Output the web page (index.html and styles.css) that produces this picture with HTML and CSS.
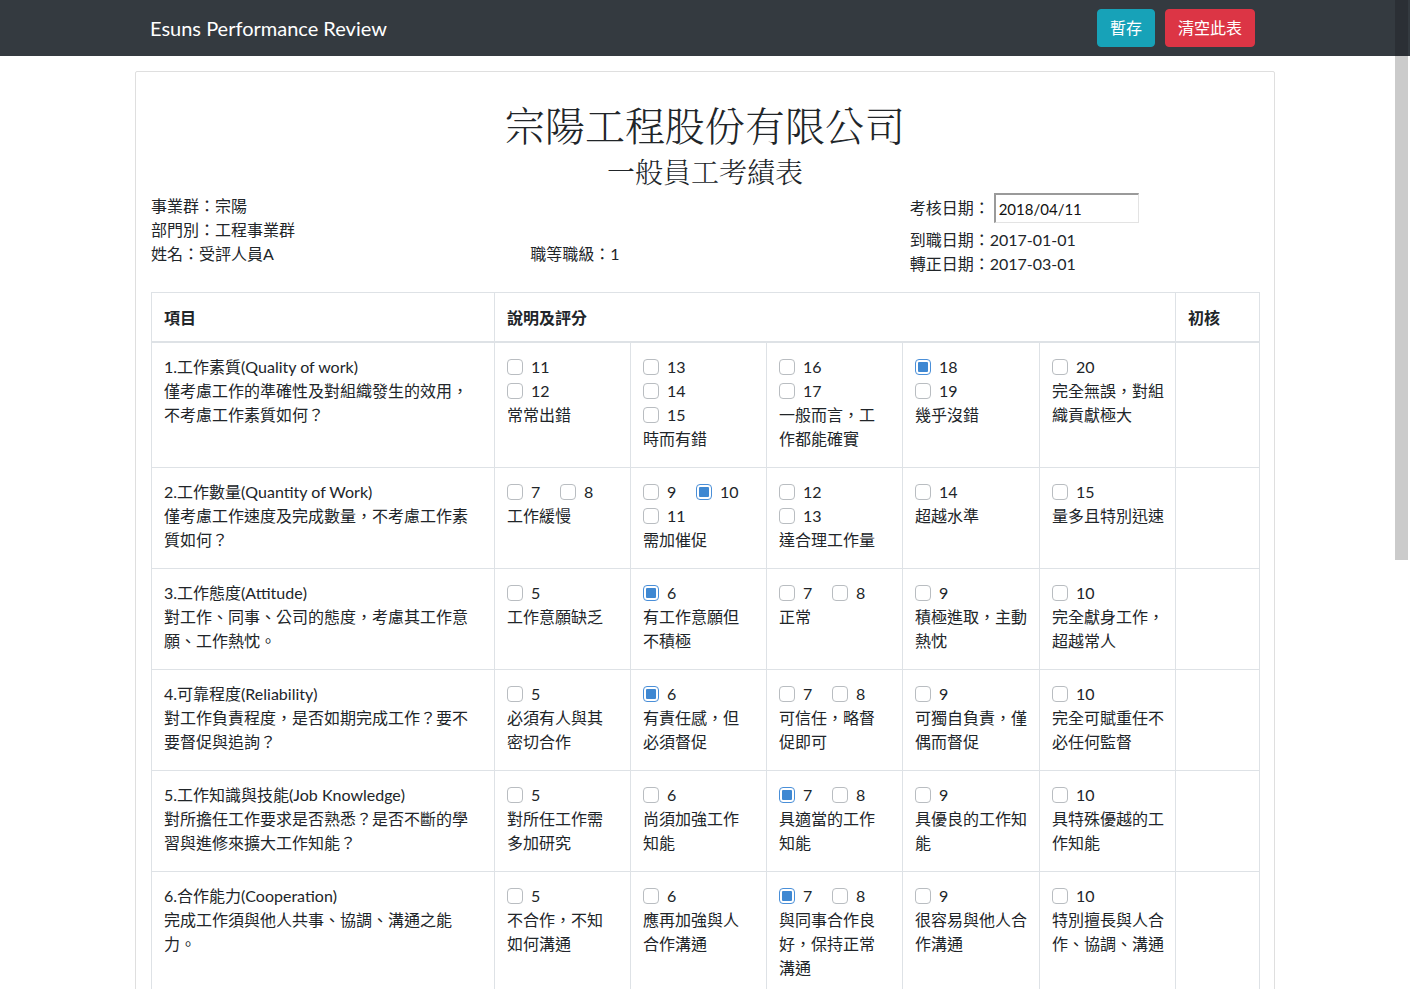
FILE: index.html
```html
<!DOCTYPE html>
<html lang="zh-Hant">
<head>
<meta charset="utf-8">
<title>Esuns Performance Review</title>
<link rel="stylesheet" href="styles.css">
</head>
<body>
<nav class="navbar">
  <div class="nav-inner">
    <span class="brand">Esuns Performance Review</span>
    <div class="nav-actions">
      <button class="btn btn-info">暫存</button>
      <button class="btn btn-danger">清空此表</button>
    </div>
  </div>
</nav>
<div class="scroll-thumb"></div>
<main class="container">
  <div class="card">
    <h1 class="title">宗陽工程股份有限公司</h1>
    <h2 class="subtitle">一般員工考績表</h2>
    <div class="info">
      <div class="info-col left">事業群：宗陽<br>部門別：工程事業群<br>姓名：受評人員A</div>
      <div class="info-col mid">職等職級：1</div>
      <div class="info-col right">
        <div class="date-row"><span class="date-label">考核日期：</span><input class="date-input" type="text" value="2018/04/11"></div>
        <div>到職日期：2017-01-01</div>
        <div>轉正日期：2017-03-01</div>
      </div>
    </div>
    <table class="review">
      <colgroup>
        <col class="c-item"><col class="c-s"><col class="c-s"><col class="c-s"><col class="c-w"><col class="c-s"><col class="c-r">
      </colgroup>
      <thead>
        <tr><th>項目</th><th colspan="5">說明及評分</th><th>初核</th></tr>
      </thead>
      <tbody>
        <tr>
          <td>1.工作素質(Quality of work)<br>僅考慮工作的準確性及對組織發生的效用，<br>不考慮工作素質如何？</td>
          <td><div class="opt"><span class="cb"></span>11</div><div class="opt"><span class="cb"></span>12</div>常常出錯</td>
          <td><div class="opt"><span class="cb"></span>13</div><div class="opt"><span class="cb"></span>14</div><div class="opt"><span class="cb"></span>15</div>時而有錯</td>
          <td><div class="opt"><span class="cb"></span>16</div><div class="opt"><span class="cb"></span>17</div>一般而言，工<br>作都能確實</td>
          <td><div class="opt"><span class="cb on"></span>18</div><div class="opt"><span class="cb"></span>19</div>幾乎沒錯</td>
          <td><div class="opt"><span class="cb"></span>20</div>完全無誤，對組<br>織貢獻極大</td>
          <td></td>
        </tr>
        <tr>
          <td>2.工作數量(Quantity of Work)<br>僅考慮工作速度及完成數量，不考慮工作素<br>質如何？</td>
          <td><div class="opts-inline"><div class="opt"><span class="cb"></span>7</div><div class="opt"><span class="cb"></span>8</div></div>工作緩慢</td>
          <td><div class="opts-inline"><div class="opt"><span class="cb"></span>9</div><div class="opt"><span class="cb on"></span>10</div></div><div class="opt"><span class="cb"></span>11</div>需加催促</td>
          <td><div class="opt"><span class="cb"></span>12</div><div class="opt"><span class="cb"></span>13</div>達合理工作量</td>
          <td><div class="opt"><span class="cb"></span>14</div>超越水準</td>
          <td><div class="opt"><span class="cb"></span>15</div>量多且特別迅速</td>
          <td></td>
        </tr>
        <tr>
          <td>3.工作態度(Attitude)<br>對工作、同事、公司的態度，考慮其工作意<br>願、工作熱忱。</td>
          <td><div class="opt"><span class="cb"></span>5</div>工作意願缺乏</td>
          <td><div class="opt"><span class="cb on"></span>6</div>有工作意願但<br>不積極</td>
          <td><div class="opts-inline"><div class="opt"><span class="cb"></span>7</div><div class="opt"><span class="cb"></span>8</div></div>正常</td>
          <td><div class="opt"><span class="cb"></span>9</div>積極進取，主動<br>熱忱</td>
          <td><div class="opt"><span class="cb"></span>10</div>完全獻身工作，<br>超越常人</td>
          <td></td>
        </tr>
        <tr>
          <td>4.可靠程度(Reliability)<br>對工作負責程度，是否如期完成工作？要不<br>要督促與追詢？</td>
          <td><div class="opt"><span class="cb"></span>5</div>必須有人與其<br>密切合作</td>
          <td><div class="opt"><span class="cb on"></span>6</div>有責任感，但<br>必須督促</td>
          <td><div class="opts-inline"><div class="opt"><span class="cb"></span>7</div><div class="opt"><span class="cb"></span>8</div></div>可信任，略督<br>促即可</td>
          <td><div class="opt"><span class="cb"></span>9</div>可獨自負責，僅<br>偶而督促</td>
          <td><div class="opt"><span class="cb"></span>10</div>完全可賦重任不<br>必任何監督</td>
          <td></td>
        </tr>
        <tr>
          <td>5.工作知識與技能(Job Knowledge)<br>對所擔任工作要求是否熟悉？是否不斷的學<br>習與進修來擴大工作知能？</td>
          <td><div class="opt"><span class="cb"></span>5</div>對所任工作需<br>多加研究</td>
          <td><div class="opt"><span class="cb"></span>6</div>尚須加強工作<br>知能</td>
          <td><div class="opts-inline"><div class="opt"><span class="cb on"></span>7</div><div class="opt"><span class="cb"></span>8</div></div>具適當的工作<br>知能</td>
          <td><div class="opt"><span class="cb"></span>9</div>具優良的工作知<br>能</td>
          <td><div class="opt"><span class="cb"></span>10</div>具特殊優越的工<br>作知能</td>
          <td></td>
        </tr>
        <tr>
          <td>6.合作能力(Cooperation)<br>完成工作須與他人共事、協調、溝通之能<br>力。</td>
          <td><div class="opt"><span class="cb"></span>5</div>不合作，不知<br>如何溝通</td>
          <td><div class="opt"><span class="cb"></span>6</div>應再加強與人<br>合作溝通</td>
          <td><div class="opts-inline"><div class="opt"><span class="cb on"></span>7</div><div class="opt"><span class="cb"></span>8</div></div>與同事合作良<br>好，保持正常<br>溝通</td>
          <td><div class="opt"><span class="cb"></span>9</div>很容易與他人合<br>作溝通</td>
          <td><div class="opt"><span class="cb"></span>10</div>特別擅長與人合<br>作、協調、溝通</td>
          <td></td>
        </tr>
      </tbody>
    </table>
  </div>
</main>
</body>
</html>
```
FILE: styles.css
```css
html {
  overflow: hidden;
}
body {
  margin: 0;
  font-family: Lato, "Noto Sans CJK TC", sans-serif;
  font-size: 16px;
  line-height: 24px;
  color: #212529;
  background: #fff;
}
.navbar {
  background: #343a40;
  height: 56px;
}
.nav-inner {
  width: 1140px;
  height: 56px;
  margin: 0 auto;
  padding: 0 20px 0 15px;
  box-sizing: border-box;
  display: flex;
  align-items: center;
  justify-content: space-between;
}
.brand {
  color: #fff;
  font-size: 20px;
  line-height: 30px;
}
.nav-actions {
  display: flex;
  gap: 10px;
}
.btn {
  font-family: Lato, "Noto Sans CJK TC", sans-serif;
  font-size: 16px;
  line-height: 24px;
  padding: 6px 12px;
  border: 1px solid transparent;
  border-radius: 4px;
  color: #fff;
  cursor: pointer;
}
.btn-info {
  background: #17a2b8;
  border-color: #17a2b8;
}
.btn-danger {
  background: #dc3545;
  border-color: #dc3545;
}
.scroll-thumb {
  position: fixed;
  top: 0;
  right: 2px;
  width: 13px;
  height: 560px;
  background: linear-gradient(#2b2f35 0, #2b2f35 56px, #cbcbcb 56px);
}
.container {
  width: 1140px;
  margin: 15px auto 0;
}
.card {
  border: 1px solid #dfdfdf;
  border-radius: 2px;
  padding: 28px 15px 40px;
}
.title {
  margin: 0;
  font-family: "Noto Serif CJK TC", "Noto Sans CJK TC", serif;
  font-size: 40px;
  line-height: 48px;
  font-weight: 300;
  text-align: center;
}
.subtitle {
  margin: 6px 0 5px;
  font-family: "Noto Serif CJK TC", "Noto Sans CJK TC", serif;
  font-size: 28px;
  line-height: 34px;
  font-weight: 300;
  text-align: center;
}
.info {
  display: grid;
  grid-template-columns: repeat(3, 1fr);
  column-gap: 30px;
}
.left {
  padding-top: 1px;
}
.mid {
  padding-top: 49px;
}
.date-row {
  display: flex;
  align-items: center;
  height: 30px;
  margin-bottom: 5px;
}
.date-label {
  width: 84px;
}
.date-input {
  width: 145px;
  height: 30px;
  box-sizing: border-box;
  border-style: solid;
  border-width: 2px 1px 1px 2px;
  border-color: #9a9a9a #e3e3e3 #e3e3e3 #9a9a9a;
  padding: 1px 3px;
  font-family: Lato, "Noto Sans CJK TC", sans-serif;
  font-size: 15px;
  color: #111;
  outline: none;
}
.review {
  width: 100%;
  margin-top: 16px;
  border-collapse: collapse;
  table-layout: fixed;
}
.c-item { width: 343px; }
.c-s { width: 136px; }
.c-w { width: 137px; }
.c-r { width: 84px; }
.review th,
.review td {
  border: 1px solid #dee2e6;
  padding: 12px 12px 16px;
  vertical-align: top;
  text-align: left;
  white-space: nowrap;
}
.review thead th {
  border-bottom: 2px solid #dee2e6;
  padding: 13px 12px 11px;
  font-weight: bold;
}
.opt {
  display: flex;
  align-items: center;
  height: 24px;
}
.opts-inline {
  display: flex;
}
.opts-inline .opt {
  width: 53px;
}
.cb {
  position: relative;
  flex: none;
  width: 16px;
  height: 16px;
  box-sizing: border-box;
  margin-right: 8px;
  border: 1px solid #b9bdc1;
  border-radius: 4px;
  background: #fff;
}
.cb.on {
  border-color: #4a8fd8;
}
.cb.on::after {
  content: "";
  position: absolute;
  top: 2px;
  left: 2px;
  right: 2px;
  bottom: 2px;
  background: #3f88d2;
  border-radius: 1px;
}
```
